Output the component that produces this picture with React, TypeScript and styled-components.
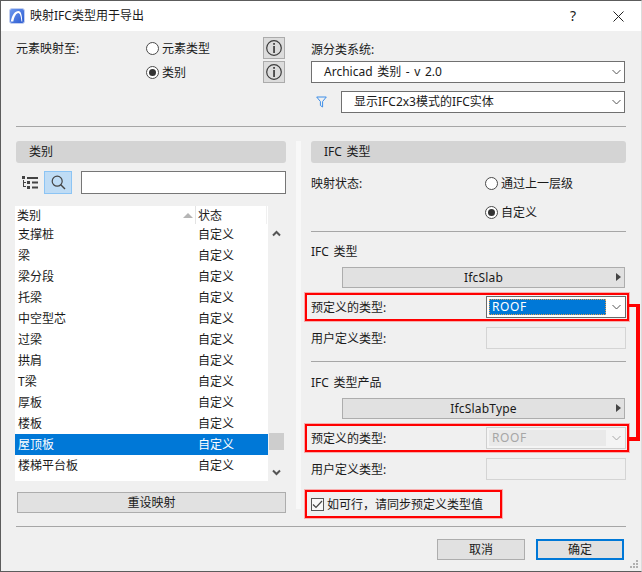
import React from "react";
import styled, { createGlobalStyle } from "styled-components";

const Global = createGlobalStyle`
  html, body { margin: 0; padding: 0; background: #fff; }
  * { box-sizing: border-box; }
`;

const Dialog = styled.div`
  position: relative;
  width: 642px;
  height: 572px;
  display: flex;
  flex-direction: column;
  background: #f0f0f0;
  border: 1px solid #5c5c5c;
  border-right-color: #dcdcdc;
  font: 12px/16px "Noto Sans", "Noto Sans CJK SC", sans-serif;
  color: #1a1a1a;
  overflow: hidden;
`;
const TitleBar = styled.div`
  height: 30px;
  flex: none;
  background: #fff;
  display: flex;
  align-items: center;
  padding: 0 17px 0 8px;
`;
const TitleText = styled.div`
  margin-left: 5px;
  flex: 1;
`;
const HelpMark = styled.div`
  font-size: 14px;
  width: 12px;
  text-align: center;
  margin-right: 34px;
`;
const Body = styled.div`
  flex: 1;
  display: flex;
  flex-direction: column;
  padding: 6px 15px 0;
`;
const TopRow = styled.div`
  display: grid;
  grid-template-columns: 270px 314px;
  column-gap: 25px;
  height: 89px;
`;
const MapGrid = styled.div`
  display: grid;
  grid-template-columns: 130px 117px 22px;
  grid-template-rows: 22px 22px;
  row-gap: 2px;
  align-items: center;
`;
const MapLabel = styled.div`
  padding-top: 1px;
`;
const Stack = styled.div`
  display: flex;
  flex-direction: column;
`;
const SourceLabel = styled.div`
  height: 24px;
  display: flex;
  align-items: center;
  padding-top: 1px;
`;
const FilterRow = styled.div`
  display: flex;
  align-items: center;
  margin-top: 8px;
`;
const FilterSlot = styled.div`
  width: 30px;
  padding-left: 5px;
  display: flex;
`;
const Radio = styled.label`
  display: flex;
  align-items: center;
  gap: 3px;
  white-space: nowrap;
  padding-top: 1px;
`;
const RadioDot = styled.span<{ $on?: boolean }>`
  width: 13px;
  height: 13px;
  margin-top: -1px;
  border-radius: 50%;
  border: 1px solid #4a4a4a;
  background: #fff;
  display: flex;
  align-items: center;
  justify-content: center;
  &::after {
    content: "";
    display: ${(p) => (p.$on ? "block" : "none")};
    width: 7px;
    height: 7px;
    border-radius: 50%;
    background: #333;
  }
`;
const InfoButton = styled.div`
  width: 22px;
  height: 22px;
  background: #dcdcdc;
  border: 1px solid #ababab;
  display: flex;
  align-items: center;
  justify-content: center;
`;
const Select = styled.div<{ $grow?: boolean }>`
  height: 22px;
  flex: ${(p) => (p.$grow ? "1" : "none")};
  display: flex;
  align-items: center;
  justify-content: space-between;
  padding: 0 3px 0 12px;
  background: #fff;
  border: 1px solid #707070;
  word-spacing: 1.5px;
`;
const SmallSelect = styled.div<{ $disabled?: boolean }>`
  width: 140px;
  height: 22px;
  display: flex;
  align-items: center;
  padding: 2px 4px 2px 2px;
  gap: 6px;
  background: ${(p) => (p.$disabled ? "#f4f4f4" : "#fff")};
  border: 1px solid ${(p) => (p.$disabled ? "#cfcfcf" : "#6a6a6a")};
`;
const SelectValue = styled.div<{ $disabled?: boolean }>`
  flex: 1;
  height: 16px;
  line-height: 16px;
  padding-left: 3px;
  letter-spacing: 0.6px;
  background: ${(p) => (p.$disabled ? "#e9e9e9" : "#0078d7")};
  color: ${(p) => (p.$disabled ? "#a6a6a6" : "#fff")};
  outline: ${(p) => (p.$disabled ? "none" : "1px dotted #e8a050")};
  outline-offset: -1px;
`;
const Divider = styled.div<{ $top?: number }>`
  height: 1px;
  flex: none;
  background: #a6a6a6;
  margin-top: ${(p) => p.$top ?? 0}px;
`;
const Columns = styled.div`
  display: grid;
  grid-template-columns: 270px 5px 315px;
  column-gap: 10px;
  margin-top: 14px;
  height: 376px;
`;
const LeftColumn = styled.div`
  display: flex;
  flex-direction: column;
`;
const Stripe = styled.div`
  height: 368px;
  background: #f8f8f8;
`;
const RightColumn = styled.div`
  display: flex;
  flex-direction: column;
`;
const SectionHeader = styled.div`
  height: 22px;
  flex: none;
  background: #d4d4d4;
  border-radius: 3px;
  display: flex;
  align-items: center;
  padding-left: 13px;
  word-spacing: 1.5px;
`;
const Toolbar = styled.div`
  display: flex;
  align-items: center;
  margin-top: 7px;
  height: 24px;
  padding-left: 6px;
`;
const SearchToggle = styled.div`
  width: 28px;
  height: 23px;
  margin-left: 5px;
  background: #bfdcf5;
  border: 1px solid #8cc4f4;
  display: flex;
  align-items: center;
  justify-content: center;
`;
const SearchInput = styled.div`
  width: 205px;
  height: 23px;
  margin-left: 9px;
  background: #fff;
  border: 1px solid #767676;
`;
const ListWrap = styled.div`
  display: flex;
  margin-top: 12px;
  height: 275px;
  margin-left: -1px;
`;
const List = styled.div`
  width: 253px;
  background: #fff;
`;
const ListHeader = styled.div`
  height: 18px;
  display: flex;
  align-items: center;
`;
const HeadName = styled.div`
  width: 181px;
  display: flex;
  align-items: center;
  justify-content: space-between;
  padding: 1px 2px 0 2px;
  height: 18px;
  border-right: 1px solid #e3e3e3;
`;
const HeadState = styled.div`
  padding: 1px 0 0 2px;
  flex: 1;
  margin-right: 1px;
  border-right: 1px solid #f0f0f0;
  height: 18px;
  display: flex;
  align-items: center;
`;
const SortMark = styled.span`
  width: 0;
  height: 0;
  border-left: 5px solid transparent;
  border-right: 5px solid transparent;
  border-bottom: 5px solid #b5b5b5;
`;
const Row = styled.div<{ $selected?: boolean }>`
  height: 21px;
  display: grid;
  grid-template-columns: 180px 1fr;
  align-items: center;
  padding: 1px 0 0 3px;
  background: ${(p) => (p.$selected ? "#0078d7" : "transparent")};
  color: ${(p) => (p.$selected ? "#fff" : "#1a1a1a")};
`;
const Scrollbar = styled.div`
  width: 15px;
  margin-left: 1px;
  padding-top: 24px;
  display: flex;
  flex-direction: column;
  align-items: center;
`;
const ScrollThumb = styled.div`
  width: 15px;
  height: 17px;
  background: #cdcdcd;
  margin-top: 196px;
`;
const ScrollDown = styled.div`
  margin-top: 19px;
  display: flex;
`;
const WideButton = styled.div`
  margin: 11px 0 0 1px;
  height: 21px;
  background: #e1e1e1;
  border: 1px solid #adadad;
  display: flex;
  align-items: center;
  justify-content: center;
`;
const StatusGrid = styled.div`
  display: grid;
  grid-template-columns: 174px 1fr;
  grid-template-rows: 22px 22px;
  row-gap: 7px;
  margin-top: 9px;
  align-items: center;
`;
const StatusLabel = styled.div`
  padding-top: 1px;
`;
const GroupLabel = styled.div<{ $top: number }>`
  height: 22px;
  display: flex;
  align-items: center;
  padding-top: 1px;
  margin-top: ${(p) => p.$top}px;
  word-spacing: 1.5px;
`;
const PickerButton = styled.div`
  height: 21px;
  margin: 5px 1px 0 31px;
  background: #e1e1e1;
  border: 1px solid #adadad;
  display: flex;
  align-items: center;
  justify-content: center;
  letter-spacing: 0.2px;
  position: relative;
  &::after {
    content: "";
    position: absolute;
    right: 3px;
    top: 5px;
    border-top: 4px solid transparent;
    border-bottom: 4px solid transparent;
    border-left: 5px solid #444;
  }
`;
const Highlight = styled.div`
  border: 2px solid #f00;
  box-shadow: 0 0 0 1px rgba(255, 90, 90, 0.45);
  display: flex;
  align-items: center;
  flex: none;
`;
const TypeBox = styled(Highlight)`
  height: 28px;
  margin: 5px -3px 0 -6px;
  padding: 0 1px 0 4px;
  justify-content: space-between;
`;
const SyncBox = styled(Highlight)`
  height: 28px;
  width: 197px;
  margin: 10px 0 0 -6px;
  padding-left: 4px;
  gap: 3px;
`;
const FieldRow = styled.div`
  display: flex;
  align-items: center;
  justify-content: space-between;
  height: 22px;
  margin-top: 6px;
`;
const FieldLabel = styled.span`
  padding-top: 1px;
`;
const FieldInput = styled.div`
  width: 140px;
  height: 22px;
  background: #f0f0f0;
  border: 1px solid #d4d4d4;
`;
const CheckBox = styled.span`
  width: 13px;
  height: 13px;
  background: #f8f8f8;
  border: 1px solid #555;
  display: flex;
  align-items: center;
  justify-content: center;
`;
const Footer = styled.div`
  display: flex;
  justify-content: flex-end;
  gap: 11px;
  margin-top: 12px;
  padding-right: 2px;
`;
const FooterButton = styled.div<{ $primary?: boolean }>`
  width: 88px;
  height: 21px;
  background: #e1e1e1;
  border: ${(p) => (p.$primary ? "2px solid #0078d7" : "1px solid #adadad")};
  display: flex;
  align-items: center;
  justify-content: center;
`;
const Bracket = styled.div`
  position: absolute;
  left: 628px;
  top: 303px;
  width: 11px;
  height: 137px;
  border: solid #f00;
  border-width: 3px 4px 4px 0;
`;
const Grip = styled.svg`
  position: absolute;
  right: 2px;
  bottom: 2px;
`;

const Chevron = ({ color = "#555" }: { color?: string }) => (
  <svg width="9" height="6" viewBox="0 0 9 6" fill="none">
    <path d="M.5 1 4.500 5 8.500 1" stroke={color} strokeWidth="1" />
  </svg>
);
const InfoIcon = () => (
  <svg width="18" height="18" viewBox="0 0 18 18" fill="none">
    <circle cx="9" cy="9" r="7.3" stroke="#3c3c3c" strokeWidth="1.2" />
    <rect x="8.2" y="4" width="1.7" height="1.8" fill="#3c3c3c" />
    <rect x="8.2" y="7" width="1.7" height="7" fill="#3c3c3c" />
  </svg>
);
const ScrollArrow = ({ down }: { down?: boolean }) => (
  <svg width="9" height="7" viewBox="0 0 9 7" fill="none">
    <path d={down ? "M1 1.5 4.5 5 8 1.5" : "M1 5.5 4.5 2 8 5.5"} stroke="#555" strokeWidth="2" />
  </svg>
);

const rows = ["支撑桩", "梁", "梁分段", "托梁", "中空型芯", "过梁", "拱肩", "T梁", "厚板", "楼板", "屋顶板", "楼梯平台板"];

export default function App() {
  return (
    <>
      <Global />
      <Dialog>
        <TitleBar>
          <svg width="16" height="16" viewBox="0 0 16 16">
            <defs>
              <linearGradient id="appIcon" x1="0" y1="0" x2="1" y2="1">
                <stop offset="0" stopColor="#6f9bf0" />
                <stop offset="1" stopColor="#2a59cf" />
              </linearGradient>
            </defs>
            <rect x="0.5" y="0.5" width="15" height="15" rx="2.5" fill="url(#appIcon)" stroke="#c3d0f0" />
            <path d="M1.800 13.500C3 7 6 3 9.500 3c2.400 0 3.500 4 3.800 10.500h-.8C12 8.500 11 5 9.300 5 7.200 5 5.300 8.500 4.300 13.500z" fill="#fff" />
          </svg>
          <TitleText>映射IFC类型用于导出</TitleText>
          <HelpMark>?</HelpMark>
          <svg width="11" height="11" viewBox="0 0 11 11">
            <path d="M.5.5l10 10M10.500.5l-10 10" stroke="#222" strokeWidth="1" fill="none" />
          </svg>
        </TitleBar>
        <Body>
          <TopRow>
            <MapGrid>
              <MapLabel>元素映射至:</MapLabel>
              <Radio><RadioDot />元素类型</Radio>
              <InfoButton><InfoIcon /></InfoButton>
              <div />
              <Radio><RadioDot $on />类别</Radio>
              <InfoButton><InfoIcon /></InfoButton>
            </MapGrid>
            <Stack>
              <SourceLabel>源分类系统:</SourceLabel>
              <Select>Archicad 类别 - v 2.0<Chevron /></Select>
              <FilterRow>
                <FilterSlot>
                  <svg width="11" height="12" viewBox="0 0 11 12" fill="none">
                    <path d="M.7 1h9.600L6.600 5.500V11L4.400 9.500v-4z" stroke="#3d8ee8" strokeWidth="1" />
                  </svg>
                </FilterSlot>
                <Select $grow>显示IFC2x3模式的IFC实体<Chevron /></Select>
              </FilterRow>
            </Stack>
          </TopRow>
          <Divider />
          <Columns>
            <LeftColumn>
              <SectionHeader>类别</SectionHeader>
              <Toolbar>
                <svg width="17" height="13" viewBox="0 0 17 13" fill="#444">
                  <rect x="0" y="0" width="3" height="3" />
                  <rect x="5" y="1" width="11" height="2" />
                  <rect x="5" y="5" width="3" height="3" />
                  <rect x="10" y="5.500" width="6" height="2" />
                  <rect x="5" y="10" width="3" height="3" />
                  <rect x="10" y="10.500" width="6" height="2" />
                  <path d="M1 4v7h3v-1H2V7h2V6H2V4z" />
                </svg>
                <SearchToggle>
                  <svg width="15" height="15" viewBox="0 0 15 15" fill="none">
                    <circle cx="6.200" cy="6.200" r="5" stroke="#444" strokeWidth="1.200" />
                    <path d="M9.800 9.800 14 14" stroke="#444" strokeWidth="1.400" />
                  </svg>
                </SearchToggle>
                <SearchInput />
              </Toolbar>
              <ListWrap>
                <List>
                  <ListHeader>
                    <HeadName>类别<SortMark /></HeadName>
                    <HeadState>状态</HeadState>
                  </ListHeader>
                  {rows.map((r) => (
                    <Row key={r} $selected={r === "屋顶板"}>
                      <span>{r}</span>
                      <span>自定义</span>
                    </Row>
                  ))}
                </List>
                <Scrollbar>
                  <ScrollArrow />
                  <ScrollThumb />
                  <ScrollDown><ScrollArrow down /></ScrollDown>
                </Scrollbar>
              </ListWrap>
              <WideButton>重设映射</WideButton>
            </LeftColumn>
            <Stripe />
            <RightColumn>
              <SectionHeader>IFC 类型</SectionHeader>
              <StatusGrid>
                <StatusLabel>映射状态:</StatusLabel>
                <Radio><RadioDot />通过上一层级</Radio>
                <div />
                <Radio><RadioDot $on />自定义</Radio>
              </StatusGrid>
              <Divider $top={8} />
              <GroupLabel $top={8}>IFC 类型</GroupLabel>
              <PickerButton>IfcSlab</PickerButton>
              <TypeBox>
                <FieldLabel>预定义的类型:</FieldLabel>
                <SmallSelect>
                  <SelectValue>ROOF</SelectValue>
                  <Chevron />
                </SmallSelect>
              </TypeBox>
              <FieldRow><FieldLabel>用户定义类型:</FieldLabel><FieldInput /></FieldRow>
              <Divider $top={12} />
              <GroupLabel $top={9}>IFC 类型产品</GroupLabel>
              <PickerButton>IfcSlabType</PickerButton>
              <TypeBox>
                <FieldLabel>预定义的类型:</FieldLabel>
                <SmallSelect $disabled>
                  <SelectValue $disabled>ROOF</SelectValue>
                  <Chevron color="#a8a8a8" />
                </SmallSelect>
              </TypeBox>
              <FieldRow><FieldLabel>用户定义类型:</FieldLabel><FieldInput /></FieldRow>
              <SyncBox>
                <CheckBox>
                  <svg width="11" height="9" viewBox="0 0 11 9" fill="none">
                    <path d="M1 4.500 4 7.500 10 1" stroke="#444" strokeWidth="1.200" />
                  </svg>
                </CheckBox>
                <FieldLabel>{"如可行\uFF0C请同步预定义类型值"}</FieldLabel>
              </SyncBox>
            </RightColumn>
          </Columns>
          <Divider $top={9} />
          <Footer>
            <FooterButton>取消</FooterButton>
            <FooterButton $primary>确定</FooterButton>
          </Footer>
        </Body>
        <Bracket />
        <Grip width="10" height="10" viewBox="0 0 10 10" fill="#b0b0b0">
          <rect x="7" y="1" width="2" height="2" />
          <rect x="4" y="4" width="2" height="2" />
          <rect x="7" y="4" width="2" height="2" />
          <rect x="1" y="7" width="2" height="2" />
          <rect x="4" y="7" width="2" height="2" />
          <rect x="7" y="7" width="2" height="2" />
        </Grip>
      </Dialog>
    </>
  );
}
